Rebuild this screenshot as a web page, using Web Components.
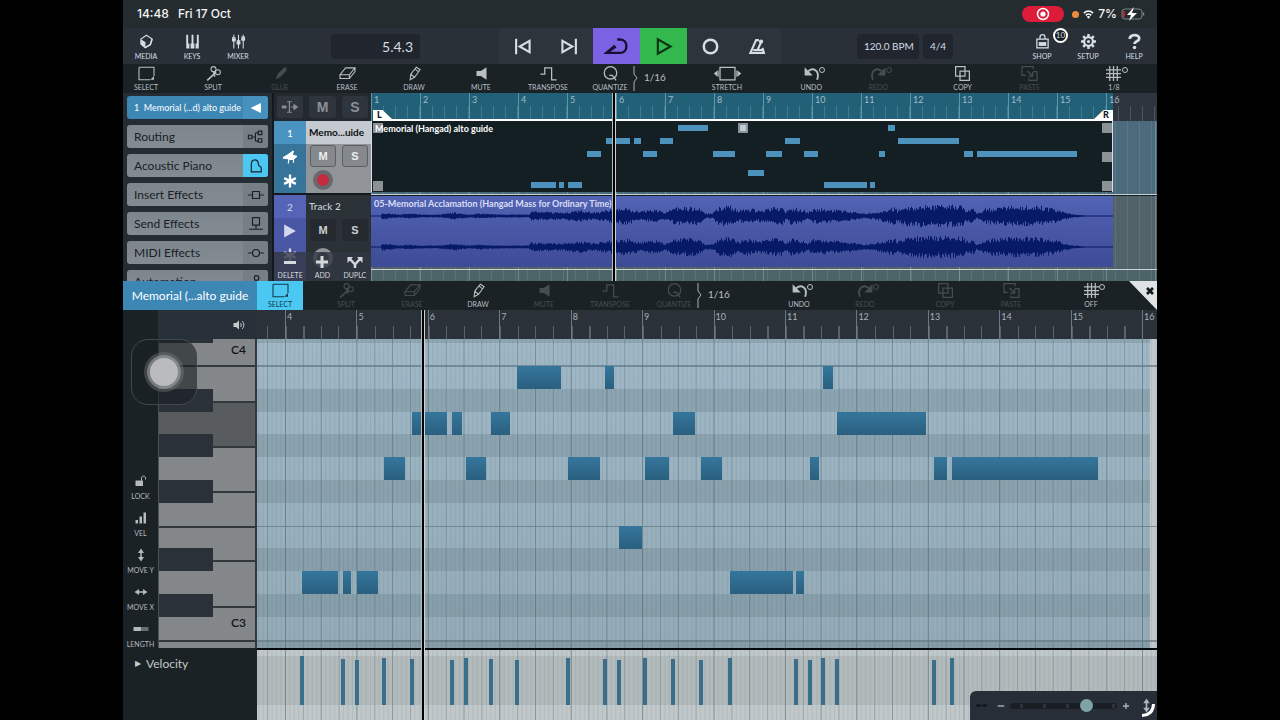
<!DOCTYPE html>
<html lang="en">
<head>
  <meta charset="UTF-8">
  <meta name="viewport" content="width=device-width, initial-scale=1.0">
  <title>Memorial (Hangad) alto guide</title>
  <style>
    body {
      margin: 0;
      background: #000;
    }
  </style>
</head>
<body>
  <daw-app></daw-app>

  <script type="module">
    // Shared by every element below
    const RESET = `
      * { box-sizing: border-box; }
      button {
        margin: 0; padding: 0; border: 0; background: none;
        color: inherit; font: inherit; cursor: pointer;
      }
    `;

    class BaseElement extends HTMLElement {
      connectedCallback() {
        if (this.shadowRoot) return;
        this.attachShadow({ mode: 'open' });
        this.shadowRoot.innerHTML = `<style>${RESET}${this.styles()}</style>${this.render()}`;
      }
      styles() { return ''; }
      render() { return '<slot></slot>'; }
    }

    // 24x24 icons. Strokes use currentColor, ".f" shapes are filled.
    const ICONS = {
      media: '<path d="M12 2 21 8 18 17 10 22 3 16 3 8Z"/><path class="f" d="M3 8.500 10.500 13 10 22 3 16.500Z"/><path stroke-width="2.500" d="M10 21.500 18 17 21 8"/>',
      keys: '<path class="f" d="M2 1h3v14h2v8H2zM9 15h1.500V1h3v14H15v8H9zM17 15h2V1h3v22h-5z"/>',
      mixer: '<path d="M4.500 1v22M12 1v22M19.500 1v22"/><path d="M2.500 6h4v5h-4zM10 11h4v5h-4zM17.500 5h4v5h-4z"/><path class="f" d="M1.500 8h6v2h-6zM9 13h6v2H9zM16.500 7h6v2h-6z"/>',
      prev: '<path stroke-width="3" d="M3 1v22M22 4v16L8 12z"/>',
      next: '<path stroke-width="3" d="M21 1v22M2 4v16L16 12z"/>',
      loop: '<path stroke-width="3.500" d="M13 2h4c12 0 12 19 0 19H-2L10 11M-1 20 11 12"/>',
      play: '<path stroke-width="3" d="M4 2v20L22 12z"/>',
      record: '<circle stroke-width="3.500" cx="12" cy="12" r="9.500"/>',
      metronome: '<path stroke-width="3" d="M14 3h-4L2 21h19l-2-7M12 17l5-11M6 17h13"/><circle class="f" cx="17" cy="5" r="3"/>',
      shop: '<path stroke-width="2" d="M3 8h18v14H3zM8 8V5a4 4 0 0 1 8 0v3"/><path class="f" d="M6 13h12v6H6z"/>',
      setup: '<circle cx="12" cy="12" r="7" stroke-width="3.500"/><circle class="f" cx="12" cy="12" r="2.500"/><path stroke-width="4" d="M12 0v5M12 19v5M0 12h5M19 12h5M3.500 3.500l3.500 3.500M17 17l3.500 3.500M20.500 3.500 17 7M7 17l-3.500 3.500"/>',
      help: '<path stroke-width="4.500" d="M4.500 8c0-8 15-8 15-1 0 5-7.500 4-7.500 9"/><circle class="f" cx="12" cy="21.500" r="2.800"/>',
      select: '<path d="M0 2h24v14M18 22H0V2"/><path class="f" d="M24 16v6h-6z"/>',
      split: '<circle cx="12" cy="5" r="4"/><circle cx="19" cy="10" r="4"/><path d="M12 9 14 17M15 11 2 23M14 11l2-2" stroke-width="2.500"/>',
      glue: '<path class="f" d="M4 22l4-10L17 3l5-1-1 6-9 9z"/>',
      erase: '<path d="M9 3h15l-9 11H0zM0 14v6h15l9-11V3M15 14v6"/>',
      draw: '<path d="M6 13 15 2l6 4-9 12-7 4zM6 13l6 5M13 5l5 4"/>',
      mute: '<path class="f" d="M4 8h7l9-6v20l-9-6H4z"/>',
      transpose: '<path stroke-width="2" d="M-1 13h7V3h11v19h8"/>',
      quantize: '<circle stroke-width="2" cx="12" cy="11" r="10"/><path stroke-width="2" d="M10 15h5l6 8"/>',
      stretch: '<path stroke-width="2" d="M0 2h24v20H0z"/><path class="f" d="M-4 7v10l-6-5zM28 7v10l6-5z"/><path d="M-3 7v10M27 7v10"/>',
      undo: '<path stroke-width="3" d="M6 9c8-8 20-2 15 13"/><path class="f" d="M1 2v13h13z"/>',
      redo: '<path stroke-width="3" d="M18 9C10 1-2 7 3 22"/><path class="f" d="M23 2v13H10z"/>',
      copy: '<path stroke-width="2" d="M1 1h15v15H1zM8 8h15v15H8z"/>',
      paste: '<path stroke-width="2" d="M6 15H0V1h18v4M11 20v3h13V9h-6M9 8l8 8M10 16h7V9"/>',
      grid: '<path stroke-width="2" d="M6 0v24M12 0v24M18 0v24M0 6h24M0 12h24M0 18h24"/>',
      routing: '<path stroke-width="2" d="M-1 9h6v6h-6zM5 12h6M11 5v14M11 5h4M11 19h4M16 2h6v6h-6zM16 15h6v6h-6z"/>',
      piano: '<path stroke-width="2" d="M4 22V9c0-10 12-10 12-1 0 6 5 4 5 8v6z"/>',
      insert: '<path stroke-width="2" d="M-2 12h8M18 12h8M6 6h12v12H6z"/>',
      send: '<path stroke-width="2" d="M6 1h12v13H6zM12 14v7M0 21h24"/>',
      midi: '<circle stroke-width="2" cx="12" cy="12" r="6"/><path stroke-width="2" d="M-2 12h8M18 12h8"/>',
      auto: '<circle stroke-width="2" cx="13" cy="5" r="4"/><path stroke-width="2" d="M11 9 3 22M14 9l8 13"/>',
      left: '<path class="f" d="M22 2v20L1 12z"/>',
      flow: '<path stroke-width="5" d="M-2 12h8"/><path stroke-width="2" d="M7 3h8M7 21h8M11 3v18"/><path class="f" d="M14 11h4V6l8 6-8 6v-5h-4z"/>',
      grand: '<path class="f" d="M0 12l7-4 10-7 2 1-2 6 7 2v2l-5 4v6h-2v-5h-6l-1 6H8l1-7-9-1z"/>',
      star: '<path stroke-width="4" d="M12 1v22M2 7l20 10M22 7 2 17"/>',
      audio: '<path class="f" d="M2 1 22 12 2 23z"/>',
      minus: '<path stroke-width="6" d="M0 13h24"/>',
      plus: '<path stroke-width="6" d="M0 12h24M12 0v24"/>',
      duplc: '<path stroke-width="5" d="M2 6l10 11L22 6M12 24v-8"/><path class="f" d="M-3 2h11L-3 14zM27 2H16l11 12z"/>',
      speaker: '<path class="f" d="M1 8h5l6-5v18l-6-5H1z"/><path stroke-width="2" d="M15 8c2 2 2 6 0 8M18 4c5 4 5 12 0 16"/>',
      lock: '<path class="f" d="M1 11h15v11H1z"/><path stroke-width="2" d="M13 11V6c0-5 8-5 8 0v3"/>',
      vel: '<path class="f" d="M1 16h5v7H1zM9 9h5v14H9zM17 1h5v22h-5z"/>',
      movey: '<path stroke-width="3" d="M12 6v12"/><path class="f" d="M12-1l6 9H6zM12 25l6-9H6z"/>',
      movex: '<path stroke-width="3" d="M6 12h12"/><path class="f" d="M-1 12l9-6v12zM25 12l-9-6v12z"/>',
      length: '<path class="f" d="M-3 8h15v8H-3z"/><path class="f" opacity=".5" d="M12 8h15v8H12z"/>',
      link: '<path stroke-width="4" d="M2 12h20"/><circle class="f" cx="4" cy="12" r="4"/><circle class="f" cx="20" cy="12" r="4"/>',
      thin: '<path stroke-width="4" d="M2 12h20"/>',
      cross: '<path stroke-width="4" d="M3 12h18M12 3v18"/>',
      close: '<path stroke-width="8" d="M3 3l18 18M21 3 3 21"/>',
      wifi: '<path stroke-width="3.500" d="M2 9c6-6 14-6 20 0M6 14c4-4 8-4 12 0"/><path class="f" d="M12 21l-4-4c2-2 6-2 8 0z"/>'
    };

    class DawIcon extends BaseElement {
      styles() {
        return `
          :host { display: inline-flex; width: var(--size, 16px); height: var(--size, 16px); flex: none; }
          svg { width: 100%; height: 100%; overflow: visible; fill: none; stroke: currentColor; stroke-width: 1.7; }
          .f { fill: currentColor; stroke: none; }
        `;
      }
      render() {
        return `<svg viewBox="0 0 24 24" aria-hidden="true">${ICONS[this.getAttribute('name')]}</svg>`;
      }
    }
    customElements.define('daw-icon', DawIcon);

    // Icon above a small caption
    class ToolButton extends BaseElement {
      styles() {
        return `
          :host { display: block; width: 46px; color: #b9bfc3; }
          :host([off]) { color: #454d52; }
          :host([active]) { background: #4bc8f2; color: #0f3a4e; }
          button {
            position: relative; width: 100%; height: 100%;
            display: flex; flex-direction: column; align-items: center; justify-content: flex-end;
            gap: var(--tool-gap, 2px); padding-bottom: var(--tool-pad, 2px);
            font-size: 7px; line-height: 8px; white-space: nowrap;
          }
          i {
            position: absolute; top: 3px; left: 31px; width: 6px; height: 6px;
            border: 1px solid; border-radius: 50%;
          }
        `;
      }
      render() {
        return `
          <button type="button">
            <daw-icon name="${this.getAttribute('icon')}"></daw-icon>
            ${this.hasAttribute('mark') ? '<i></i>' : ''}
            <slot></slot>
          </button>`;
      }
    }
    customElements.define('tool-button', ToolButton);

    class StatusBar extends BaseElement {
      styles() {
        return `
          :host {
            display: flex; align-items: center; gap: 9px; height: 28px; padding: 0 12px 0 14px;
            background: #252c30; color: #f4f5f6; font: 500 12px/16px Inter, "Liberation Sans", sans-serif;
          }
          .right { margin-left: auto; display: flex; align-items: center; gap: 4px; }
          .rec {
            display: flex; align-items: center; justify-content: center;
            width: 42px; height: 16px; margin-right: 4px; border-radius: 8px; background: #dd1c3a;
          }
          .rec svg { width: 14px; height: 14px; }
          .dot { width: 7px; height: 7px; border-radius: 50%; background: #ee8a3c; }
          .battery { width: 24px; height: 14px; }
          daw-icon { --size: 11px; }
        `;
      }
      render() {
        return `
          <span>14:48</span><span>Fri 17 Oct</span>
          <div class="right">
            <button type="button" class="rec" aria-label="Screen recording">
              <svg viewBox="0 0 14 14"><circle cx="7" cy="7" r="5.500" fill="none" stroke="#fff" stroke-width="1.500"/><circle cx="7" cy="7" r="2.600" fill="#fff"/></svg>
            </button>
            <i class="dot"></i>
            <daw-icon name="wifi"></daw-icon>
            <span>7%</span>
            <svg class="battery" viewBox="0 0 24 14">
              <rect x="1" y="2" width="20" height="10" rx="3" fill="none" stroke="#7d8488"/>
              <path d="M22.500 5.500v3" stroke="#7d8488" stroke-width="1.500"/>
              <rect x="2" y="4" width="2" height="6" fill="#b3262f"/>
              <path d="M13 0 6 8h4l-2 6 8-8h-5z" fill="#fff"/>
            </svg>
          </div>`;
      }
    }
    customElements.define('status-bar', StatusBar);

    class TransportBar extends BaseElement {
      styles() {
        return `
          :host {
            display: grid; grid-template-columns: 1fr auto 1fr; height: 36px;
            background: #2a3038; color: #d5dde5; --tool-pad: 4px; --tool-gap: 3px;
          }
          .side { display: flex; align-items: center; }
          .side tool-button { height: 100%; color: inherit; --size: 15px; }
          .left { padding-right: 79px; }
          .right { padding-left: 76px; }
          .field {
            height: 25px; padding: 0 7px; border-radius: 3px; background: #21262e;
            font-size: 10px; line-height: 25px; white-space: nowrap;
          }
          .position { width: 89px; margin-left: auto; text-align: right; font-size: 14px; }
          .bpm { width: 62px; margin-right: 4px; }
          .shop { position: relative; margin-left: auto; height: 100%; }
          .badge {
            position: absolute; top: 0; right: -3px; width: 15px; height: 15px;
            border: 2px solid #fff; border-radius: 50%; background: #1b2024;
            font-size: 8px; line-height: 11px; display: flex; justify-content: center;
          }
          .center { display: flex; background: #2e343b; }
          .center button {
            width: 47px; display: flex; align-items: center; justify-content: center; --size: 17px;
          }
          .loop { background: #7b62e3; color: #150f35; }
          .play { background: #32b84c; color: #0b3314; }
        `;
      }
      render() {
        return `
          <div class="side left">
            <tool-button icon="media">MEDIA</tool-button>
            <tool-button icon="keys">KEYS</tool-button>
            <tool-button icon="mixer">MIXER</tool-button>
            <button type="button" class="field position">5.4.3</button>
          </div>
          <div class="center">
            <button type="button" aria-label="Previous"><daw-icon name="prev"></daw-icon></button>
            <button type="button" aria-label="Next"><daw-icon name="next"></daw-icon></button>
            <button type="button" class="loop" aria-label="Cycle"><daw-icon name="loop"></daw-icon></button>
            <button type="button" class="play" aria-label="Play"><daw-icon name="play"></daw-icon></button>
            <button type="button" aria-label="Record"><daw-icon name="record"></daw-icon></button>
            <button type="button" aria-label="Metronome"><daw-icon name="metronome"></daw-icon></button>
          </div>
          <div class="side right">
            <button type="button" class="field bpm">120.0 BPM</button>
            <button type="button" class="field">4/4</button>
            <div class="shop">
              <tool-button icon="shop">SHOP</tool-button>
              <span class="badge">10</span>
            </div>
            <tool-button icon="setup">SETUP</tool-button>
            <tool-button icon="help">HELP</tool-button>
          </div>`;
      }
    }
    customElements.define('transport-bar', TransportBar);

    // Row of grouped tool buttons, groups come from the slot
    class ToolBar extends BaseElement {
      styles() {
        return `
          :host { display: flex; height: 29px; background: #1b2226; overflow: hidden; }
          ::slotted(*) { flex: none; }
        `;
      }
    }
    customElements.define('tool-bar', ToolBar);

    class QuantizeValue extends BaseElement {
      styles() {
        return `
          :host { display: flex; align-items: center; width: 39px; color: #b9bfc3; font-size: 10px; line-height: 12px; }
          svg { width: 5px; height: 25px; margin-right: 6px; fill: none; stroke: #aab0b4; }
          button { padding-bottom: 3px; }
        `;
      }
      render() {
        return `
          <svg viewBox="0 0 5 25"><path d="M1 0v8l3 4-3 4v9"/></svg>
          <button type="button"><slot></slot></button>`;
      }
    }
    customElements.define('quantize-value', QuantizeValue);

    class TrackInspector extends BaseElement {
      styles() {
        return `
          :host {
            display: flex; flex-direction: column; gap: 6px; height: 188px; padding: 3px 4px 0;
            background: #252d34; overflow: hidden;
          }
          button {
            display: flex; flex: none; height: 23px; border-radius: 3px; overflow: hidden;
            background: linear-gradient(#7d868d, #848c92); color: #1a2026; font-size: 12px; line-height: 23px;
          }
          span { flex: 1; padding-left: 7px; text-align: left; white-space: nowrap; }
          i { display: flex; align-items: center; justify-content: center; width: 25px; background: #777f86; --size: 14px; }
          .head { background: #3d87b5; color: #fff; font-size: 9px; }
          .head i { background: #4691bd; --size: 12px; }
          .lit i { background: #4bc8f2; }
        `;
      }
      render() {
        const rows = [
          ['1&nbsp; Memorial (...d) alto guide', 'left', 'head'],
          ['Routing', 'routing', ''],
          ['Acoustic Piano', 'piano', 'lit'],
          ['Insert Effects', 'insert', ''],
          ['Send Effects', 'send', ''],
          ['MIDI Effects', 'midi', ''],
          ['Automation', 'auto', '']
        ];
        return rows.map(([label, icon, cls]) => `
          <button type="button" class="${cls}">
            <span>${label}</span><i><daw-icon name="${icon}"></daw-icon></i>
          </button>`).join('');
      }
    }
    customElements.define('track-inspector', TrackInspector);

    class TrackList extends BaseElement {
      styles() {
        return `
          :host {
            display: block; position: relative; height: 188px; padding-left: 2px;
            background: #14191d; color: #cdd2d6; overflow: hidden;
          }
          .bar { display: flex; gap: 6px; height: 28px; padding: 3px 3px 3px; background: #23292f; }
          .bar button { flex: 1; border-radius: 3px; background: #2f353c; color: #8b9196; --size: 14px; }
          .bar .ms { font-size: 14px; }
          .ms { font: 700 11px "Liberation Sans", sans-serif; }
          .track { display: grid; grid-template-columns: 32px 1fr; height: 72px; margin-bottom: 2px; }
          .side { display: grid; grid-template-rows: 23px 25px 24px; place-items: center; color: #fff; --size: 14px; font-size: 10px; }
          .main { display: grid; grid-template-rows: 23px 25px 24px; padding-left: 1px; }
          .name { padding-left: 2px; font-size: 10px; font-weight: 700; line-height: 22px; white-space: nowrap; }
          .pair { display: flex; gap: 6px; padding: 1px 3px 2px; }
          .pair button { flex: 1; border-radius: 3px; }
          .one .side { background: linear-gradient(#4b93c0 23px, #37749a 23px); }
          .one .main { background: linear-gradient(#c5cad0 23px, #919599 23px); }
          .one .name { color: #0d1013; }
          .one .pair button { border: 1px solid #5b6064; color: #eceeef; background: #85898d; }
          .two { height: 86px; background: #2a3137; }
          .two .side { background: linear-gradient(#5664b8 23px, #4a57a5 23px); color: #d5d9ef; }
          .two .name { font-weight: 500; }
          .two .pair button { background: #242a30; }
          .rec { width: 20px; height: 20px; margin: 1px 6px; border: 4px solid #67696c; border-radius: 50%; background: #c32a40; }
          .two .rec { margin-top: 5px; border-color: #8f9599; background: #3a4046; }
          .actions {
            position: absolute; left: 2px; right: 0; bottom: 0; display: flex; height: 29px;
            background: rgba(50, 56, 66, .8); --size: 12px; --tool-gap: 3px;
          }
          .two .side + .main + .actions { left: 0; }
          .actions tool-button { flex: 1; width: auto; color: #d5d9dc; }
        `;
      }
      render() {
        return `
          <div class="bar">
            <button type="button" aria-label="Follow"><daw-icon name="flow"></daw-icon></button>
            <button type="button" class="ms">M</button>
            <button type="button" class="ms">S</button>
          </div>
          <div class="track one">
            <div class="side"><span>1</span><daw-icon name="grand"></daw-icon><daw-icon name="star"></daw-icon></div>
            <div class="main">
              <div class="name">Memo...uide</div>
              <div class="pair"><button type="button" class="ms">M</button><button type="button" class="ms">S</button></div>
              <button type="button" class="rec" aria-label="Record enable"></button>
            </div>
          </div>
          <div class="track two">
            <div class="side"><span>2</span><daw-icon name="audio"></daw-icon><daw-icon name="star"></daw-icon></div>
            <div class="main">
              <div class="name">Track 2</div>
              <div class="pair"><button type="button" class="ms">M</button><button type="button" class="ms">S</button></div>
              <button type="button" class="rec" aria-label="Record enable"></button>
            </div>
          </div>
          <div class="actions">
            <tool-button icon="minus">DELETE</tool-button>
            <tool-button icon="plus">ADD</tool-button>
            <tool-button icon="duplc">DUPLC</tool-button>
          </div>`;
      }
    }
    customElements.define('track-list', TrackList);

    // Notes: [left, right, semitones below B3]; x in editor units, bar 4 at 28
    const NOTES = [
      [45, 81, 9], [86, 94, 9], [100, 121, 9], [127, 148, 4], [155, 190, 2], [195, 205, 2],
      [209, 229, 4], [234, 253, 2], [260, 304, 0], [311, 343, 4], [348, 357, 0], [362, 385, 7],
      [388, 412, 4], [416, 438, 2], [444, 465, 4], [473, 536, 9], [539, 547, 9], [553, 562, 4],
      [566, 576, 0], [580, 669, 2], [677, 690, 4], [695, 841, 4]
    ];
    const EDIT_BAR = 857 / 12;
    const SONG_BAR = 49;
    const toSong = x => ((x - 28) / EDIT_BAR + 3) * SONG_BAR;

    const PLAYHEAD = `
      .playhead {
        position: absolute; top: 0; bottom: 0; width: 4px; pointer-events: none;
        background: linear-gradient(90deg, #b4bcc0 0 1px, #000 1px 3px, #cdd2d4 3px);
      }
    `;

    // Loudness of the audio clip: [x, half height]
    const LOUDNESS = [
      [0, 0], [9, 0], [11, 3], [28, 1], [39, 2], [50, 1], [68, 1], [83, 3], [98, 1], [108, 2], [128, 1],
      [157, 1], [160, 4], [190, 3], [210, 5], [222, 3], [240, 6], [255, 8], [268, 4], [284, 6], [294, 3],
      [305, 8], [326, 8], [334, 2], [341, 2], [348, 9], [360, 9], [367, 5], [375, 8], [386, 5], [404, 8],
      [412, 8], [414, 3], [420, 8], [432, 6], [436, 3], [442, 7], [460, 6], [480, 4], [492, 2], [504, 3],
      [514, 6], [524, 8], [526, 5], [535, 9], [550, 10], [570, 10], [591, 10], [595, 5], [602, 7],
      [605, 2], [615, 7], [640, 9], [670, 9], [685, 6], [694, 3], [702, 1], [715, 0], [742, 0]
    ];

    function waveform(mid, seed) {
      let n = seed;
      const random = () => (n = (n * 16807) % 2147483647) / 2147483647;
      let d = '';
      for (let i = 0; i < LOUDNESS.length - 1; i++) {
        const [x0, a0] = LOUDNESS[i];
        const [x1, a1] = LOUDNESS[i + 1];
        for (let x = x0; x < x1; x++) {
          const a = a0 + (a1 - a0) * (x - x0) / (x1 - x0);
          d += `M${x + .5} ${mid - a * (.5 + random() * .6) - .5}V${mid + a * (.5 + random() * .6) + .5}`;
        }
      }
      return d;
    }

    class SongTimeline extends BaseElement {
      styles() {
        return `${PLAYHEAD}
          :host { display: block; position: relative; height: 188px; background: #141b1f; overflow: hidden; }
          .ruler { position: relative; display: flex; height: 28px; background: linear-gradient(90deg, #226077 742px, #2f353e 742px); }
          .ruler span {
            flex: none; width: 49px; padding-left: 2px; border-left: 1px solid #5f97a8;
            background: repeating-linear-gradient(90deg, #417a8e 0 1px, transparent 1px 12px) 11px 100% / 37px 15px no-repeat;
            color: #9fbccb; font-size: 9px; line-height: 14px;
          }
          .ruler span:last-of-type {
            background-image: repeating-linear-gradient(90deg, #4d555e 0 1px, transparent 1px 12px);
          }
          .range {
            position: absolute; left: 2px; top: 17px; width: 740px; height: 11px; border-bottom: 2px solid #fff;
            display: flex; justify-content: space-between; color: #111; font-size: 9px; font-weight: 800; line-height: 10px;
          }
          .range b { width: 19px; background: #fff; padding: 0 4px; }
          .range b:first-child { clip-path: polygon(0 0, 50% 0, 100% 100%, 0 100%); }
          .range b:last-child { clip-path: polygon(50% 0, 100% 0, 100% 100%, 0 100%); padding-left: 9px; }
          .lane { position: relative; height: 74px; background: #4b6a7b; border-bottom: 1px solid #c9d2d6; }
          .audio { background: #526269; }
          .rest { height: 12px; background: #4c6468; }
          .lane, .rest {
            background-image: repeating-linear-gradient(90deg, rgba(190, 220, 225, .3) 0 1px, transparent 1px 49px),
              repeating-linear-gradient(90deg, rgba(190, 220, 225, .12) 0 1px, transparent 1px 12px);
          }
          .clip { position: relative; width: 742px; height: 71px; overflow: hidden; color: #fff; font-size: 9px; font-weight: 700; line-height: 14px; }
          .clip span { position: absolute; left: 3px; top: 1px; }
          .midi { border: 1px solid #d9dfe2; border-width: 0 1px 0 1px; background: #141f24; }
          .audio .clip { margin-top: 1px; background: linear-gradient(#5263b4, #3e4b96); color: #d9def6; }
          svg { display: block; width: 742px; height: 71px; }
        `;
      }
      render() {
        const bars = Array.from({ length: 16 }, (_, i) => `<span>${i + 1}</span>`).join('');
        const notes = NOTES.map(([a, b, row]) =>
          `<rect x="${Math.round(toSong(a))}" y="${Math.round(4.4 + row * 6.3)}" width="${Math.round(toSong(b) - toSong(a))}" height="6"/>`).join('');
        return `
          <div class="ruler">${bars}
            <div class="range"><b>L</b><b>R</b></div>
          </div>
          <div class="lane">
            <div class="clip midi">
              <svg>
                <g fill="#8b9194"><rect x="1" y="2" width="10" height="10"/><rect x="1" y="60" width="10" height="10"/>
                  <rect x="366" y="2" width="10" height="10"/><rect x="730" y="2" width="10" height="10"/>
                  <rect x="730" y="31" width="10" height="10"/><rect x="730" y="60" width="10" height="10"/></g>
                <g fill="#4c92bd">${notes}</g>
                <rect x="368" y="4" width="6" height="6" fill="#c5ccd0"/>
              </svg>
              <span>Memorial (Hangad) alto guide</span>
            </div>
          </div>
          <div class="lane audio">
            <div class="clip">
              <svg><path d="${waveform(20, 77)}${waveform(51, 4242)}" stroke="#071a68"/></svg>
              <span>05-Memorial Acclamation (Hangad Mass for Ordinary Time)</span>
            </div>
          </div>
          <div class="rest"></div>
          <div class="playhead" style="left: 241px"></div>`;
      }
    }
    customElements.define('song-timeline', SongTimeline);

    // Rows of the keyboard, measured from the top edge of the view
    const rowTop = row => Math.round(27 + row * 22.8);
    const BLACK_ROWS = [1, 3, 5, 8, 10];

    function gridLines(height) {
      let out = '';
      for (let i = -6; i < 197; i++) {
        const x = 28 + i * EDIT_BAR / 16;
        const alpha = i % 16 === 0 ? .5 : i % 8 === 0 ? .42 : i % 4 === 0 ? .3 : .1;
        out += `<rect x="${x.toFixed(1)}" width="1" height="${height}" fill="#3c5560" opacity="${alpha}"/>`;
      }
      return out;
    }

    class PianoKeys extends BaseElement {
      styles() {
        return `
          :host { display: block; position: relative; background: #84878a; color: #101416; }
          svg { display: block; width: 100%; height: 309px; }
          span { position: absolute; right: 11px; font-size: 12px; font-weight: 600; line-height: 16px; }
        `;
      }
      render() {
        const black = BLACK_ROWS.map(row =>
          `<rect y="${rowTop(row)}" width="55" height="23"/>`).join('');
        const seams = [[0, 27], [55, 63], [55, 108], [55, 153], [0, 188], [55, 222], [55, 268], [0, 302]].map(([x, y]) =>
          `<rect x="${x}" y="${y - 1}" width="${98 - x}" height="2"/>`).join('');
        return `
          <svg viewBox="0 0 99 309" preserveAspectRatio="none" shape-rendering="crispEdges">
            <path fill="#595c5e" d="M55 63h43v45H55zM0 73h55v23H0z"/>
            <g fill="#2a3139"><rect width="55" height="4"/>${black}</g>
            <g fill="#32383c">${seams}<rect x="97" width="2" height="309"/></g>
            <rect width="1" height="309" fill="#4c5154"/>
          </svg>
          <span style="top: 3px">C4</span>
          <span style="bottom: 17px">C3</span>`;
      }
    }
    customElements.define('piano-keys', PianoKeys);

    class NoteGrid extends BaseElement {
      styles() {
        return `${PLAYHEAD}
          :host { display: grid; grid-template-rows: 29px 309px auto; position: relative; min-width: 0; overflow: hidden; }
          svg { display: block; width: 100%; height: 100%; }
          .ruler {
            display: flex; padding-left: 28px; color: #a9b0b5; font-size: 9px; line-height: 14px; overflow: hidden;
            background: linear-gradient(#59616a, #59616a) 10px 100% / 1px 13px no-repeat #2a3139;
          }
          .ruler span {
            flex: 1; padding-left: 1px; border-left: 1px solid #71787d;
            background: repeating-linear-gradient(90deg, #59616a 0 1px, transparent 1px 25%) 0 100% / 100% 13px no-repeat;
          }
          .ruler span:last-child { flex: 0 0 15px; background: none; }
          .velocity { height: 72px; border-top: 2px solid #05090b; }
        `;
      }
      render() {
        const bars = Array.from({ length: 13 }, (_, i) => `<span>${i + 4}</span>`).join('');
        const dark = BLACK_ROWS.map(row => `<rect y="${rowTop(row)}" width="900" height="23"/>`).join('');
        const notes = NOTES.map(([a, b, row]) =>
          `<rect x="${a}" y="${rowTop(row)}" width="${b - a}" height="23"/>`).join('');
        const hits = NOTES.map(([a], i) => {
          const top = i === 0 ? 6 : 8 + i % 3;
          return `<rect x="${a - 2}" y="${top}" width="4" height="${55 - top}"/>`;
        }).join('');
        return `
          <div class="ruler">${bars}</div>
          <svg viewBox="0 0 900 309" preserveAspectRatio="none">
            <defs>
              <linearGradient id="sky" x2="0" y2="1"><stop stop-color="#a0b8c6"/><stop offset="1" stop-color="#94abb7"/></linearGradient>
              <linearGradient id="note" x2="0" y2="1"><stop stop-color="#35769c"/><stop offset="1" stop-color="#2a5f7f"/></linearGradient>
            </defs>
            <rect width="900" height="309" fill="url(#sky)"/>
            <g fill="#6f8790" opacity=".36"><rect width="900" height="4"/>${dark}<rect y="303" width="900" height="6"/></g>
            <rect x="893" width="7" height="309" fill="#c3c9cb"/>
            ${gridLines(309)}
            <g fill="#5f7884" opacity=".7"><rect y="26" width="900" height="2"/><rect y="187" width="900" height="1"/><rect y="301" width="900" height="2"/></g>
            <g fill="url(#note)">${notes}</g>
          </svg>
          <div class="velocity">
            <svg viewBox="0 0 900 70" preserveAspectRatio="none">
              <rect width="900" height="70" fill="#c0c8ca"/>
              <rect y="6" width="900" height="49" fill="#b3babb"/>
              <g>${gridLines(70)}</g>
              <g fill="#3a6e8c">${hits}</g>
            </svg>
          </div>
          <div class="playhead" style="left: 164px"></div>`;
      }
    }
    customElements.define('note-grid', NoteGrid);

    class EditTools extends BaseElement {
      styles() {
        return `
          :host {
            display: flex; flex-direction: column; justify-content: flex-end; background: #1b2226;
            --size: 12px; --tool-gap: 5px; --tool-pad: 0;
          }
          tool-button { width: 100%; height: 37px; color: #b4babe; }
        `;
      }
      render() {
        return `
          <tool-button icon="lock">LOCK</tool-button>
          <tool-button icon="vel">VEL</tool-button>
          <tool-button icon="movey">MOVE Y</tool-button>
          <tool-button icon="movex">MOVE X</tool-button>
          <tool-button icon="length">LENGTH</tool-button>`;
      }
    }
    customElements.define('edit-tools', EditTools);

    // Floating assistive touch button
    class TouchButton extends BaseElement {
      styles() {
        return `
          :host { position: absolute; left: 8px; top: 29px; }
          button {
            display: flex; align-items: center; justify-content: center; width: 66px; height: 66px;
            border: 1px solid #42484b; border-radius: 17px; background: rgba(26, 32, 36, .62);
          }
          i {
            width: 28px; height: 28px; border-radius: 50%; background: #b9bbbc;
            box-shadow: 0 0 0 3px rgba(160, 163, 165, .6), 0 0 0 6px rgba(120, 124, 126, .4);
          }
        `;
      }
      render() { return '<button type="button" aria-label="AssistiveTouch"><i></i></button>'; }
    }
    customElements.define('touch-button', TouchButton);

    class ZoomPanel extends BaseElement {
      styles() {
        return `
          :host {
            position: absolute; right: 0; bottom: 0; display: flex; align-items: center; gap: 5px;
            height: 29px; padding: 0 4px 0 6px; border-radius: 6px 0 0 0; background: #272e37; color: #a9b8c0; --size: 8px;
          }
          .link { color: #14191d; --size: 11px; margin-right: 5px; }
          .axis { --size: 13px; margin-left: 5px; }
          input { appearance: none; width: 107px; height: 14px; margin: 0; background: none; }
          input::-webkit-slider-runnable-track {
            height: 6px; border-radius: 3px;
            background: radial-gradient(circle, #2c343b 2px, transparent 2px) 0 0 / 23px 6px #191f25;
          }
          input::-webkit-slider-thumb {
            appearance: none; width: 13px; height: 13px; margin-top: -4px; border-radius: 50%; background: #7fa3a6;
          }
          button { display: flex; }
          svg { position: absolute; right: 2px; bottom: 3px; width: 14px; height: 14px; fill: none; stroke: #fff; stroke-width: 3; }
        `;
      }
      render() {
        return `
          <daw-icon class="link" name="link"></daw-icon>
          <button type="button" aria-label="Zoom out"><daw-icon name="thin"></daw-icon></button>
          <input type="range" min="0" max="100" value="74" aria-label="Zoom">
          <button type="button" aria-label="Zoom in"><daw-icon name="cross"></daw-icon></button>
          <daw-icon class="axis" name="movey"></daw-icon>
          <svg viewBox="0 0 14 14"><path d="M1 12.500Q12 12 12.500 1"/></svg>`;
      }
    }
    customElements.define('zoom-panel', ZoomPanel);

    class KeyEditor extends BaseElement {
      styles() {
        return `
          :host {
            display: grid; position: relative; grid-template: 29px 309px 72px / 35px 99px minmax(0, 1fr);
            background: #1b2226; color: #c4c9cc;
          }
          edit-tools { grid-area: 1 / 1 / 3 / 2; }
          .monitor { background: #28303a; --size: 12px; padding: 0 12px 0 0; text-align: right; }
          piano-keys { grid-area: 2 / 2; }
          note-grid { grid-area: 1 / 3 / 4 / 4; }
          .velocity { grid-area: 3 / 1 / 4 / 3; padding: 8px 10px; }
          .velocity button { display: flex; align-items: center; gap: 3px; font-size: 12px; line-height: 16px; }
          .velocity small { font: 8px/16px "DejaVu Sans", sans-serif; width: 10px; }
        `;
      }
      render() {
        return `
          <edit-tools></edit-tools>
          <button type="button" class="monitor" aria-label="Monitor"><daw-icon name="speaker"></daw-icon></button>
          <piano-keys></piano-keys>
          <div class="velocity"><button type="button"><small>▶</small>Velocity</button></div>
          <note-grid></note-grid>
          <touch-button></touch-button>
          <zoom-panel></zoom-panel>`;
      }
    }
    customElements.define('key-editor', KeyEditor);

    class DawApp extends BaseElement {
      styles() {
        return `
          :host {
            display: flex; flex-direction: column; min-height: 100vh; margin: 0 123px; overflow: hidden;
            background: #1b2226; font-family: Lato, "Open Sans", sans-serif;
          }
          .arranger { display: grid; grid-template-columns: 149px 99px minmax(0, 1fr); }
          .group { display: flex; gap: 21px; }
          .gap { flex: 1; }
          .edit .group { gap: 20px; }
          .title { width: 134px; background: #3d87b5; color: #fff; font-size: 12px; white-space: nowrap; }
          .close {
            display: flex; justify-content: flex-end; padding: 6px 3px; width: 28px; background: #dfe3e5; color: #14191c;
            clip-path: polygon(0 0, 100% 0, 100% 100%); --size: 8px;
          }
          .end { width: 20px; }
          tool-bar { --size: 15px; }
          button { margin: 0; padding: 0; border: 0; font: inherit; }
        `;
      }
      render() {
        return `
          <status-bar></status-bar>
          <transport-bar></transport-bar>
          <tool-bar>
            <div class="group">
              <tool-button icon="select">SELECT</tool-button>
              <tool-button icon="split">SPLIT</tool-button>
              <tool-button icon="glue" off>GLUE</tool-button>
              <tool-button icon="erase">ERASE</tool-button>
              <tool-button icon="draw">DRAW</tool-button>
              <tool-button icon="mute">MUTE</tool-button>
              <tool-button icon="transpose">TRANSPOSE</tool-button>
            </div>
            <div class="group" style="gap: 0; padding: 0 32px 0 16px">
              <tool-button icon="quantize">QUANTIZE</tool-button>
              <quantize-value>1/16</quantize-value>
            </div>
            <tool-button icon="stretch">STRETCH</tool-button>
            <div class="gap"></div>
            <div class="group">
              <tool-button icon="undo" mark>UNDO</tool-button>
              <tool-button icon="redo" mark off>REDO</tool-button>
            </div>
            <div class="gap"></div>
            <div class="group">
              <tool-button icon="copy">COPY</tool-button>
              <tool-button icon="paste" off>PASTE</tool-button>
            </div>
            <div class="gap"></div>
            <tool-button icon="grid" mark>1/8</tool-button>
            <div class="end"></div>
          </tool-bar>
          <div class="arranger">
            <track-inspector></track-inspector>
            <track-list></track-list>
            <song-timeline></song-timeline>
          </div>
          <tool-bar class="edit">
            <button type="button" class="title">Memorial (...alto guide</button>
            <div class="group">
              <tool-button icon="select" active>SELECT</tool-button>
              <tool-button icon="split" off>SPLIT</tool-button>
              <tool-button icon="erase" off>ERASE</tool-button>
              <tool-button icon="draw">DRAW</tool-button>
              <tool-button icon="mute" off>MUTE</tool-button>
              <tool-button icon="transpose" off>TRANSPOSE</tool-button>
            </div>
            <div class="group" style="gap: 0; padding: 0 40px 0 18px">
              <tool-button icon="quantize" off>QUANTIZE</tool-button>
              <quantize-value>1/16</quantize-value>
            </div>
            <div class="group">
              <tool-button icon="undo" mark>UNDO</tool-button>
              <tool-button icon="redo" mark off>REDO</tool-button>
            </div>
            <div class="gap"></div>
            <div class="group">
              <tool-button icon="copy" off>COPY</tool-button>
              <tool-button icon="paste" off>PASTE</tool-button>
            </div>
            <div class="gap"></div>
            <tool-button icon="grid" mark>OFF</tool-button>
            <div style="width: 15px"></div>
            <button type="button" class="close" aria-label="Close editor"><daw-icon name="close"></daw-icon></button>
          </tool-bar>
          <key-editor></key-editor>`;
      }
    }
    customElements.define('daw-app', DawApp);
  </script>
</body>
</html>
